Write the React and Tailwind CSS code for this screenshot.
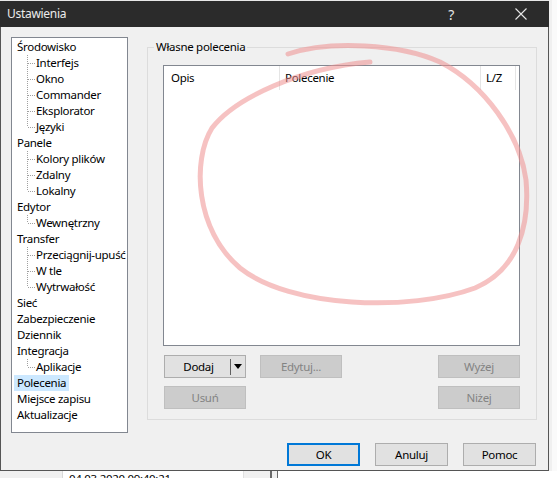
import React from "react";

const tree = [
  ["Środowisko", 0],
  ["Interfejs", 1],
  ["Okno", 1],
  ["Commander", 1],
  ["Eksplorator", 1],
  ["Języki", 2],
  ["Panele", 0],
  ["Kolory plików", 1],
  ["Zdalny", 1],
  ["Lokalny", 2],
  ["Edytor", 0],
  ["Wewnętrzny", 2],
  ["Transfer", 0],
  ["Przeciągnij-upuść", 1],
  ["W tle", 1],
  ["Wytrwałość", 2],
  ["Sieć", 0],
  ["Zabezpieczenie", 0],
  ["Dziennik", 0],
  ["Integracja", 0],
  ["Aplikacje", 2],
  ["Polecenia", 0, true],
  ["Miejsce zapisu", 0],
  ["Aktualizacje", 0],
];

function TreeRow({ label, level, selected }) {
  if (level === 0) {
    return (
      <div className="h-[16px] flex items-center pl-[2px] whitespace-nowrap">
        <span
          className={
            "h-[16px] leading-[16px] px-[3px] " + (selected ? "bg-[#cce8ff]" : "")
          }
        >
          {label}
        </span>
      </div>
    );
  }
  const last = level === 2;
  return (
    <div className="h-[16px] flex items-center pl-[2px] whitespace-nowrap">
      <svg width="22" height="16" className="shrink-0">
        <line
          x1="13.5"
          y1="0"
          x2="13.5"
          y2={last ? 8 : 16}
          stroke="#a0a0a0"
          strokeWidth="1"
          strokeDasharray="1 1"
        />
        <line
          x1="14"
          y1="8.5"
          x2="21"
          y2="8.5"
          stroke="#a0a0a0"
          strokeWidth="1"
          strokeDasharray="1 1"
        />
      </svg>
      <span className="h-[16px] leading-[16px]">{label}</span>
    </div>
  );
}

function Btn({ children, disabled, className = "" }) {
  return (
    <div
      className={
        "h-[23px] flex items-center justify-center border " +
        (disabled
          ? "bg-[#cccccc] border-[#bfbfbf] text-[#838383] "
          : "bg-[#e1e1e1] border-[#adadad] text-black ") +
        className
      }
    >
      {children}
    </div>
  );
}

export default function App() {
  return (
    <div
      className="w-[557px] h-[478px] relative overflow-hidden bg-white text-[11.5px] tracking-[-0.3px] text-black"
      style={{ fontFamily: '"Noto Sans", "Liberation Sans", sans-serif' }}
    >
      <div className="flex">
        <div className="w-[549px] flex flex-col">
          <div className="h-[1px] bg-[#e8e8e8]" />
          <div className="h-[470px] flex flex-col border border-t-0 border-[#555555] bg-[#f0f0f0]">
            {/* title bar */}
            <div className="h-[26px] bg-[#2b2b2b] flex items-center text-[#ececec] -mx-px">
              <span className="pl-[7px] text-[12px]">Ustawienia</span>
              <span className="ml-auto mr-[61px] text-[14px] text-[#e6e6e6]">?</span>
              <svg width="12" height="12" className="mr-[22px]" viewBox="0 0 12 12">
                <path d="M0.5 0.5 L11.5 11.5 M11.5 0.5 L0.5 11.5" stroke="#e6e6e6" strokeWidth="1.1" />
              </svg>
            </div>
            {/* body */}
            <div className="flex pl-[10px] pt-[10px]">
              {/* tree */}
              <div className="w-[117px] h-[396px] bg-white border border-[#828790] pt-px overflow-hidden">
                {tree.map(([l, lv, sel]) => (
                  <TreeRow key={l} label={l} level={lv} selected={sel} />
                ))}
              </div>
              {/* group */}
              <div className="ml-[19px] mt-[10px] w-[390px] h-[373px] border border-[#dcdcdc] relative pl-[15px] pt-[17px]">
                <span className="absolute left-[6px] top-[-9px] bg-[#f0f0f0] px-[2px] leading-[16px]">
                  Własne polecenia
                </span>
                <div className="w-[357px] h-[281px] bg-white border border-[#828790]">
                  <div className="flex h-[24px]">
                    <div className="w-[116px] border-r border-[#e5e5e5] flex items-center pl-[7px]">
                      Opis
                    </div>
                    <div className="w-[201px] border-r border-[#e5e5e5] flex items-center pl-[5px]">
                      Polecenie
                    </div>
                    <div className="w-[35px] border-r border-[#e5e5e5] flex items-center pl-[5px]">
                      L/Z
                    </div>
                  </div>
                </div>
                <div className="flex mt-[9px] w-[357px]">
                  <div className="w-[82px] h-[23px] flex items-center border bg-[#e1e1e1] border-[#adadad] ml-px">
                    <span className="flex-1 text-center pl-[2px]">Dodaj</span>
                    <span className="w-px h-[16px] bg-[#606060]" />
                    <svg width="12" height="8" viewBox="0 0 12 8" className="mx-[1px]">
                      <path d="M2 1 L10 1 L6 6 Z" fill="#000" />
                    </svg>
                  </div>
                  <Btn disabled className="w-[82px] ml-[14px]">Edytuj...</Btn>
                  <Btn disabled className="w-[82px] ml-auto">Wyżej</Btn>
                </div>
                <div className="flex mt-[8px] w-[357px]">
                  <Btn disabled className="w-[82px] ml-px">Usuń</Btn>
                  <Btn disabled className="w-[82px] ml-auto">Niżej</Btn>
                </div>
              </div>
            </div>
            {/* bottom buttons */}
            <div className="flex justify-end gap-[15px] pr-[12px] mt-[10px]">
              <div className="w-[73px] h-[23px] flex items-center justify-center border-2 border-[#0078d7] bg-[#e1e1e1]">
                OK
              </div>
              <Btn className="w-[73px]">Anuluj</Btn>
              <Btn className="w-[73px]">Pomoc</Btn>
            </div>
          </div>
        </div>
        <div className="flex-1 flex">
          <div className="w-[3px] bg-[#f0f0f0]" />
          <div className="flex-1 bg-[#fafafa]" />
        </div>
      </div>
      {/* below dialog */}
      <div className="flex h-[8px] bg-white">
        <div className="w-[63px] bg-[#f0f0f0] border-r border-[#d9d9d9]" />
        <div className="w-[180px] relative overflow-hidden">
          <span className="absolute left-[6px] top-[1px] leading-[14px] whitespace-nowrap">04.03.2020 09:40:21</span>
        </div>
        <div className="w-[27px] bg-[#f0f0f0] border-l border-[#e0e0e0]" />
        <div className="w-[2px] bg-[#6a6a6a]" />
        <div className="w-[5px] bg-[#f0f0f0]" />
        <div className="w-px bg-[#6a6a6a]" />
        <div className="flex-1 bg-white" />
      </div>
      {/* red annotation */}
      <svg
        className="absolute inset-0 pointer-events-none"
        width="557"
        height="478"
        viewBox="0 0 557 478"
      >
        <path
          d="M 370 62 C 300 68 235 98 212 128 C 192 160 195 230 240 268 C 290 308 410 312 475 288 C 518 270 530 225 526 180 C 520 135 485 85 440 62 C 400 44 330 40 288 54"
          fill="none"
          stroke="#ee9090"
          strokeOpacity="0.55"
          strokeWidth="5"
          strokeLinecap="round"
        />
      </svg>
    </div>
  );
}
